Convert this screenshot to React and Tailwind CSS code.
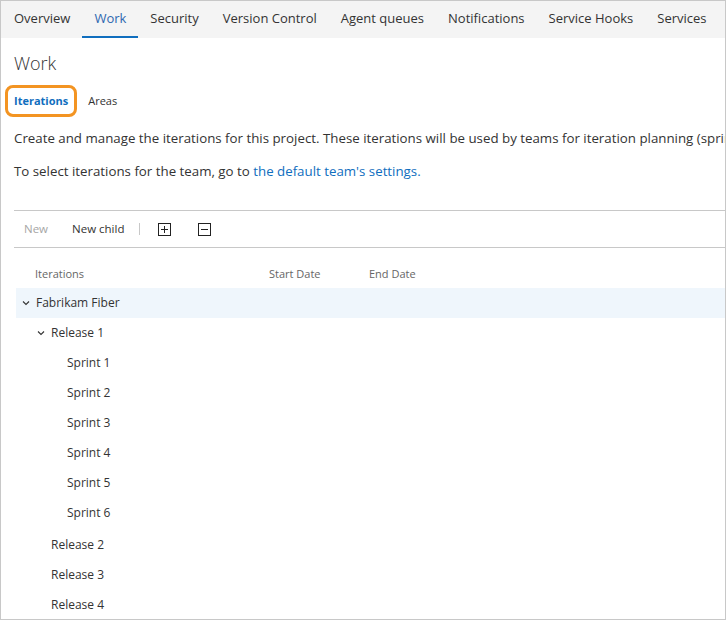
import React from 'react';

const tabs = ['Overview', 'Work', 'Security', 'Version Control', 'Agent queues', 'Notifications', 'Service Hooks', 'Services'];

const rows = [
  { label: 'Fabrikam Fiber', level: 0, open: true, selected: true },
  { label: 'Release 1', level: 1, open: true },
  { label: 'Sprint 1', level: 2 },
  { label: 'Sprint 2', level: 2 },
  { label: 'Sprint 3', level: 2 },
  { label: 'Sprint 4', level: 2 },
  { label: 'Sprint 5', level: 2 },
  { label: 'Sprint 6', level: 2 },
  { label: 'Release 2', level: 1, gap: true },
  { label: 'Release 3', level: 1 },
  { label: 'Release 4', level: 1 },
];

const Chevron = () => (
  <svg width="8" height="6" viewBox="0 0 8 6" className="shrink-0">
    <path d="M1 1.5l3 3 3-3" fill="none" stroke="#333" strokeWidth="1.1" />
  </svg>
);

const BoxIcon = ({ plus }) => (
  <svg width="13" height="13" viewBox="0 0 13 13">
    <rect x="0.5" y="0.5" width="12" height="12" fill="none" stroke="#222" />
    <path d="M3 6.5h7" stroke="#222" />
    {plus && <path d="M6.5 3v7" stroke="#222" />}
  </svg>
);

const TreeRow = ({ row }) => {
  const indent = { 0: 'pl-[6px]', 1: 'pl-[21px]', 2: 'pl-[51px]' }[row.level];
  return (
    <div
      className={`h-[30px] flex items-center gap-[6px] ${indent} ${row.selected ? 'bg-[#eff6fc]' : ''} ${row.gap ? 'mt-[2px]' : ''}`}
    >
      {row.open && <Chevron />}
      {!row.open && row.level === 1 && <span className="w-[8px]" />}
      <span className="text-[12px] text-[#333]">{row.label}</span>
    </div>
  );
};

export default function App() {
  return (
    <div
      className="w-[726px] h-[620px] border border-[#c8c8c8] bg-white overflow-hidden whitespace-nowrap text-[#333]"
      style={{ fontFamily: '"Open Sans", "Noto Sans", sans-serif' }}
    >
      <div className="h-[37px] bg-[#f4f4f4] flex items-stretch pl-[1px]">
        {tabs.map((t) => (
          <div
            key={t}
            className={`px-[12px] flex items-center text-[13px] pb-[2px] ${t === 'Work' ? 'border-b-2 border-[#106ebe] text-[#2e68b0] pt-[2px]' : 'text-[#333]'}`}
          >
            {t}
          </div>
        ))}
      </div>

      <div className="pl-[13px]">
        <h1 className="pt-[12px] leading-[26px] text-[18px] font-light text-[#333]">Work</h1>

        <div className="mt-[9px] flex items-center">
          <div className="-ml-[9px] h-[32px] px-[6px] flex items-center border-[3px] border-[#f39422] rounded-[8px]">
            <span className="text-[11px] font-bold text-[#106ebe]">Iterations</span>
          </div>
          <span className="ml-[11px] text-[11px] text-[#333]">Areas</span>
        </div>

        <p className="mt-[11px] leading-[20px] text-[13.3px]">
          Create and manage the iterations for this project. These iterations will be used by teams for iteration planning (sprints).
        </p>
        <p className="mt-[13px] leading-[20px] text-[13.3px]">
          To select iterations for the team, go to <span className="text-[#106ebe]">the default team's settings.</span>
        </p>

        <div className="mt-[29px] border-t border-[#c8c8c8] h-[37px] flex items-center text-[11.5px]">
          <span className="ml-[10px] text-[#a6a6a6]">New</span>
          <span className="ml-[24px] text-[#333]">New child</span>
          <span className="ml-[15px] w-px h-[12px] bg-[#c8c8c8]" />
          <span className="ml-[18px] flex"><BoxIcon plus /></span>
          <span className="ml-[27px] flex"><BoxIcon /></span>
        </div>

        <div className="border-t border-[#c8c8c8] h-[41px] pt-[16px] leading-[20px] flex text-[11px] text-[#666]">
          <span className="ml-[21px] w-[234px]">Iterations</span>
          <span className="w-[100px]">Start Date</span>
          <span>End Date</span>
        </div>

        <div className="ml-[2px]">
          {rows.map((r) => (
            <TreeRow key={r.label} row={r} />
          ))}
        </div>
      </div>
    </div>
  );
}
